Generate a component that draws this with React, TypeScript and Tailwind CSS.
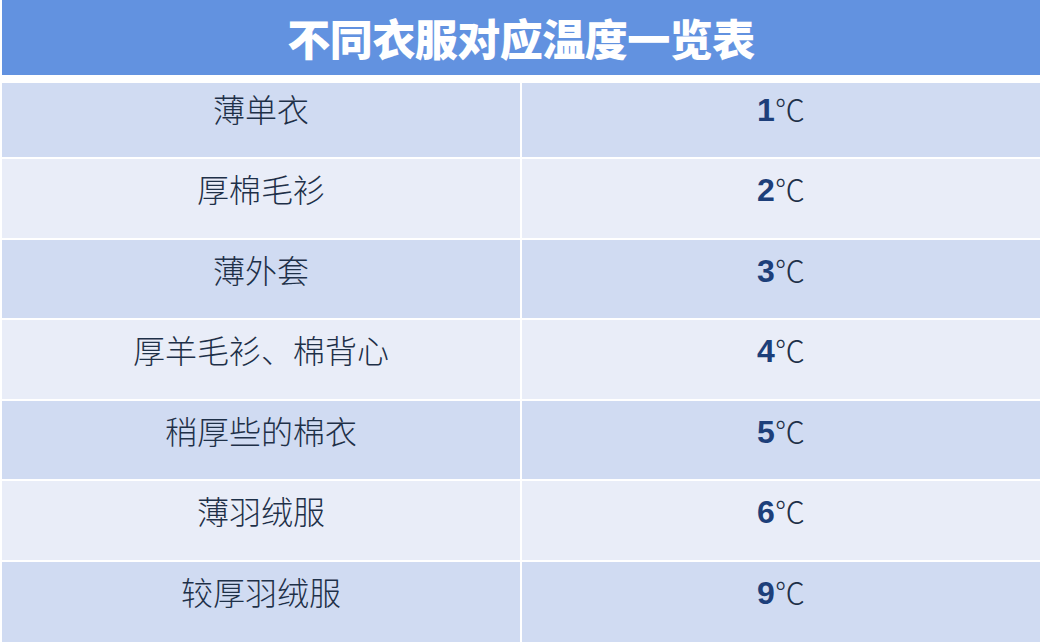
const rows = [
  { name: '薄单衣', temp: '1' },
  { name: '厚棉毛衫', temp: '2' },
  { name: '薄外套', temp: '3' },
  { name: '厚羊毛衫、棉背心', temp: '4' },
  { name: '稍厚些的棉衣', temp: '5' },
  { name: '薄羽绒服', temp: '6' },
  { name: '较厚羽绒服', temp: '9' },
];

const cjk = { fontFamily: '"Noto Sans CJK SC", "Noto Sans", sans-serif' };

export default function App() {
  return (
    <div className="w-[1040px] h-[642px] overflow-hidden bg-white pl-[2px] flex flex-col" style={cjk}>
      <div className="h-[75px] shrink-0 bg-[#6292e0] flex items-center justify-center">
        <h1 className="text-[43px] leading-none font-black text-white tracking-[-0.5px]">不同衣服对应温度一览表</h1>
      </div>
      <div className="h-[8px] shrink-0" />
      <div className="flex-1 flex flex-col gap-[2px]">
        {rows.map((r, i) => {
          const bg = i % 2 === 0 ? 'bg-[#d0dbf2]' : 'bg-[#e9edf8]';
          const pad = i === 0 ? 'pt-[9px]' : 'pt-[13px]';
          const h = i === 0 ? 'h-[74px] shrink-0' : i === rows.length - 1 ? 'flex-1' : 'h-[78.5px] shrink-0';
          return (
            <div key={r.temp} className={`flex gap-[2px] ${h}`}>
              <div className={`w-[518px] flex justify-center ${pad} ${bg}`}>
                <span className="text-[32px] leading-[32px] font-light text-[#1e3048]">{r.name}</span>
              </div>
              <div className={`flex-1 flex justify-center ${pad} ${bg}`}>
                <span className="text-[32px] leading-[32px] text-[#1e3048] flex items-baseline">
                  <span
                    className="font-bold text-[#1d3f7a] text-[32px]"
                    style={{ fontFamily: '"Liberation Sans Narrow", "Liberation Sans", sans-serif' }}
                  >
                    {r.temp}
                  </span>
                  <span className="text-[30px] font-light">℃</span>
                </span>
              </div>
            </div>
          );
        })}
      </div>
    </div>
  );
}
